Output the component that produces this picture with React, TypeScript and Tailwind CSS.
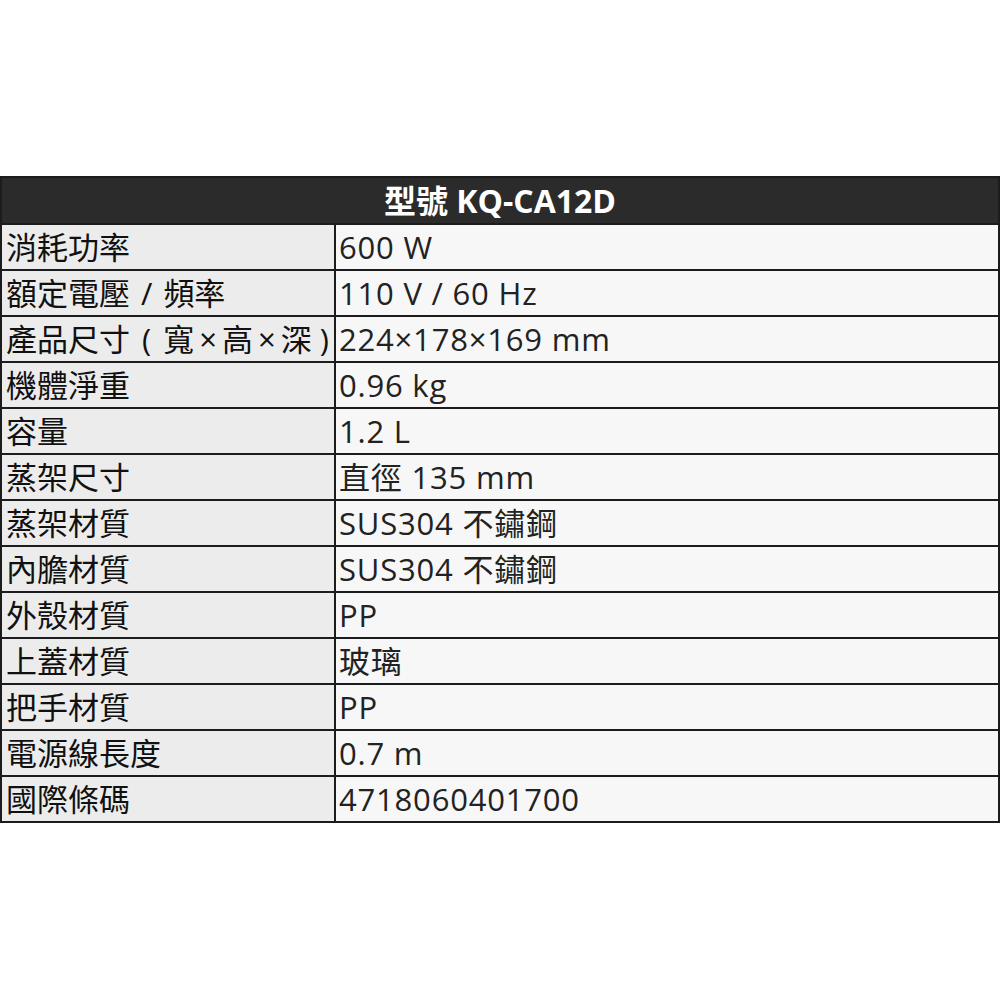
import type { ReactNode } from "react";

const rows: [string, ReactNode, string][] = [
  ["power", "消耗功率", "600 W"],
  [
    "voltage",
    <>
      額定電壓<span className="mx-[11px]">/</span>頻率
    </>,
    "110 V / 60 Hz",
  ],
  [
    "size",
    <>
      產品尺寸<span className="mx-[12px]">(</span>寬
      <span className="mx-[5px]">×</span>高
      <span className="mx-[5px]">×</span>深
      <span className="ml-[8px]">)</span>
    </>,
    "224×178×169 mm",
  ],
  ["weight", "機體淨重", "0.96 kg"],
  ["capacity", "容量", "1.2 L"],
  ["rack", "蒸架尺寸", "直徑 135 mm"],
  ["rackMat", "蒸架材質", "SUS304 不鏽鋼"],
  ["inner", "內膽材質", "SUS304 不鏽鋼"],
  ["shell", "外殼材質", "PP"],
  ["lid", "上蓋材質", "玻璃"],
  ["handle", "把手材質", "PP"],
  ["cord", "電源線長度", "0.7 m"],
  ["barcode", "國際條碼", "4718060401700"],
];

const font = {
  fontFamily: '"Open Sans", "Noto Sans CJK TC", sans-serif',
};

const App = () => {
  return (
    <div className="w-[1000px] h-[1000px] bg-white pt-[176px]" style={font}>
      <div className="border-2 border-[#1c1c1c] w-[1000px]">
        {/* Header */}
        <div className="h-[45px] bg-[#2b2b2b] flex items-center justify-center">
          <span className="text-white font-bold text-[32px] leading-none">
            型號 KQ-CA12D
          </span>
        </div>
        {rows.map(([key, label, value]) => (
          <div key={key} className="flex h-[46px] border-t-2 border-[#1c1c1c]">
            <div className="w-[334px] shrink-0 bg-[#ececec] border-r-2 border-[#1c1c1c] flex items-center pl-[4px] overflow-hidden">
              <span className="text-[31px] leading-none text-[#111] whitespace-nowrap">
                {label}
              </span>
            </div>
            <div className="flex-1 bg-[#f7f7f7] flex items-center pl-[3px]">
              <span className="text-[31px] leading-none text-[#222] whitespace-nowrap tracking-[0.8px]">
                {value}
              </span>
            </div>
          </div>
        ))}
      </div>
    </div>
  );
};

export default App;
